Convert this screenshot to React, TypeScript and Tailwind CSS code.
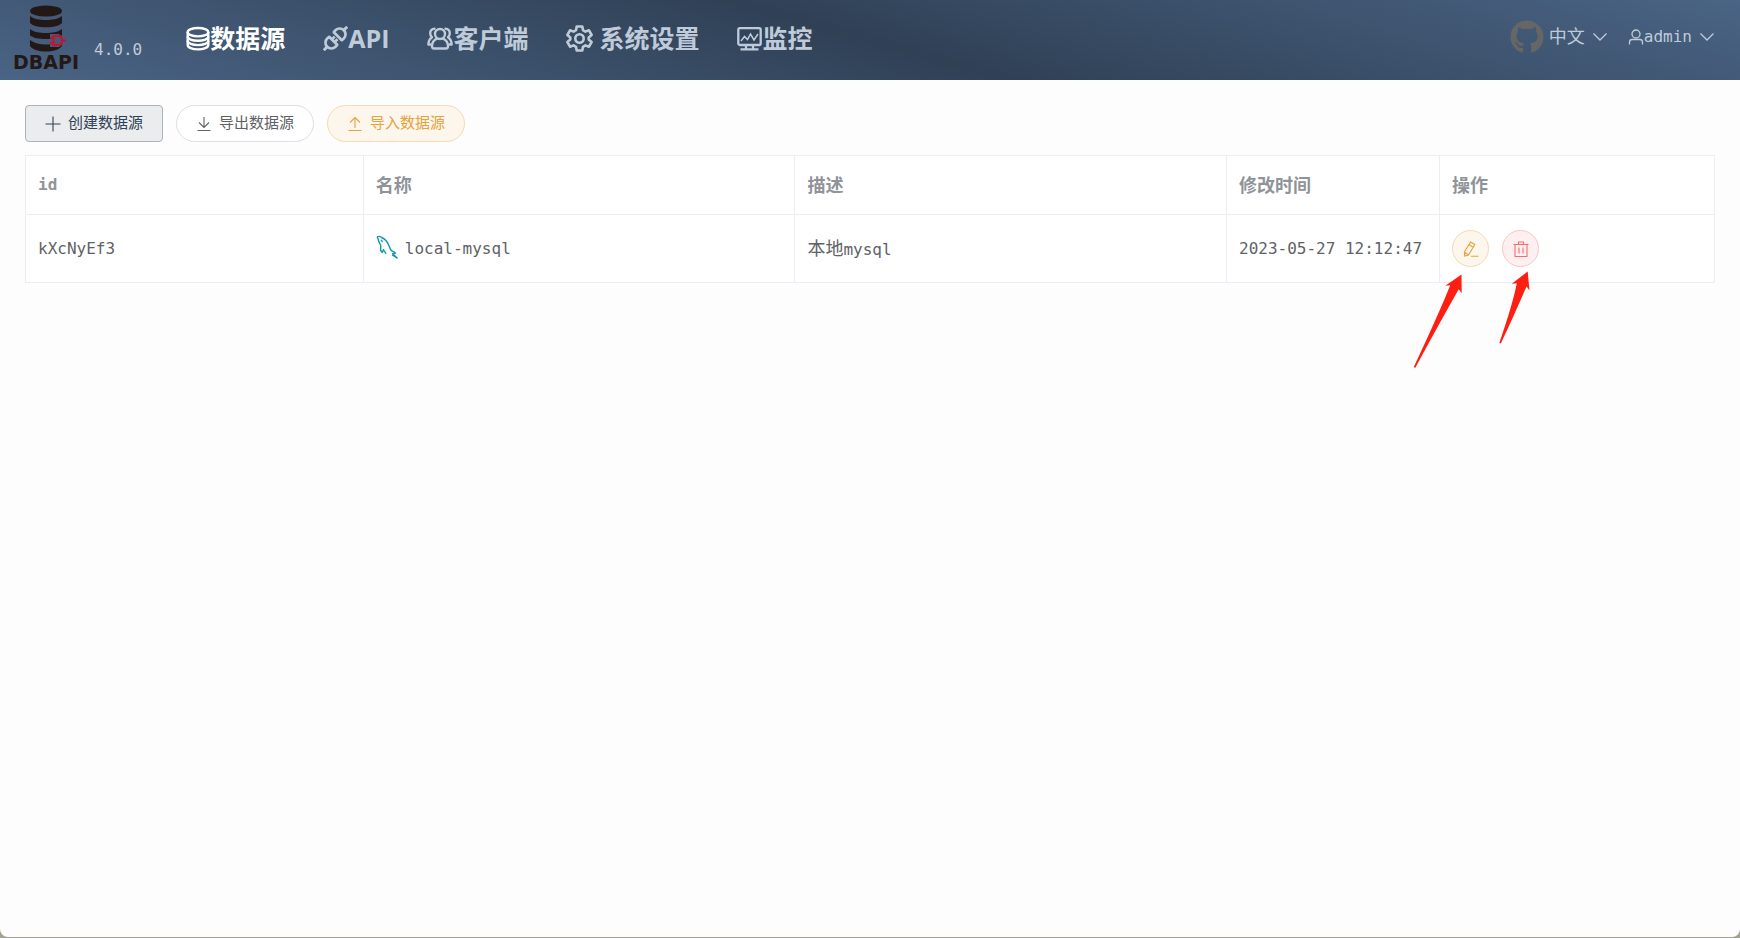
import type { ReactNode } from "react"
import { FaGithub } from "react-icons/fa"

const navItems = [
  { label: "数据源", icon: <DatabaseIcon />, active: true },
  { label: "API", icon: <PlugIcon /> },
  { label: "客户端", icon: <UsersIcon /> },
  { label: "系统设置", icon: <GearIcon />, spaced: true },
  { label: "监控", icon: <MonitorIcon /> },
]

const rows = [{ id: "kXcNyEf3", name: "local-mysql", note: ["本地", "mysql"], updated: "2023-05-27 12:12:47" }]

function Logo() {
  return (
    <a href="#" className="flex w-[66px] flex-col items-center pb-1 text-[#231815]">
      <svg width="42" height="47" viewBox="-3 0 42 47" fill="currentColor" aria-hidden="true">
        <ellipse cx="18" cy="6" rx="16" ry="5.6" />
        <path d="M2 11c4 3.2 10 4 16 4s12-.8 16-4v7c-3 3-9 4.300-16 4.300S5 21 2 18z" />
        <path d="M2 24c4 3.200 10 4 16 4s12-.8 16-4v6c-3 3-9 4-16 4S5 33 2 30.500z" />
        <path d="M2 35c4 3.200 10 4.500 16 4.500s12-1 16-4.500v6c-3 3.800-9 5.500-16 5.500S5 45 2 41z" />
        <path d="M22 29h9l5 5v4l-5 4h-9z" fill="#445a76" />
        <path d="M25.500 31h4c3 0 4.500 2 4.500 4.500S32.500 40 29.500 40h-4z" fill="none" stroke="#c8102e" strokeWidth="2" />
        <path d="M22 33h3.500M22 38h3.500M34 35.500h4" stroke="#c8102e" strokeWidth="2" />
      </svg>
      <span className="mt-px font-['DejaVu_Sans',sans-serif] text-[19px] leading-[18px] font-bold">DBAPI</span>
    </a>
  )
}

function DatabaseIcon() {
  return (
    <svg width="24" height="25" viewBox="0 0 24 25" fill="none" stroke="currentColor" strokeWidth="2.400" aria-hidden="true">
      <ellipse cx="12" cy="6.200" rx="10.300" ry="4.200" />
      <path d="M1.700 6v13c0 2.500 4.600 4.400 10.300 4.400S22.300 21.500 22.300 19V6" />
      <path d="M1.700 10.500c0 2.500 4.600 4.300 10.300 4.300s10.300-1.800 10.300-4.300M1.700 14.800c0 2.500 4.600 4.300 10.300 4.300s10.300-1.800 10.300-4.300" />
    </svg>
  )
}

function PlugIcon() {
  return (
    <svg width="25" height="25" viewBox="0 0 25 25" fill="none" stroke="currentColor" strokeWidth="2.700" strokeLinejoin="round" aria-hidden="true">
      <path d="M.8 24.200l3.700-3.700M20.500 4.500L24.200.8" strokeWidth="3" />
      <path d="M6.200 10.800l8 8-1.700 2a5.600 5.600 0 0 1-8.300-8.300z" />
      <path d="M10.800 6.200l8 8 2-1.700a5.600 5.600 0 0 0-8.300-8.300z" />
      <path d="M8.300 14l3.400-3.400M11 16.700l3.400-3.400" />
    </svg>
  )
}

function UsersIcon() {
  return (
    <svg width="26" height="25" viewBox="0 0 26 25" fill="none" stroke="currentColor" strokeWidth="2.400" strokeLinecap="round" strokeLinejoin="round" aria-hidden="true">
      <circle cx="13" cy="8" r="5" />
      <path d="M10 12.700C7 14 5 17 5 20.300c0 1.500.8 2.200 2 2.200h12c1.200 0 2-.7 2-2.200 0-3.300-2-6.300-5-7.600" />
      <path d="M7.500 2.700C4.800 2.700 3.200 5 3.200 7.300c0 1.700.7 3 1.800 3.900C2.800 12.700 1.400 15 1.400 18.500h2.200M18.500 2.700c2.700 0 4.300 2.300 4.300 4.600 0 1.700-.7 3-1.800 3.900 2.200 1.500 3.600 3.800 3.600 7.300h-2.200" />
    </svg>
  )
}

function GearIcon() {
  return (
    <svg width="27" height="27" viewBox="0 0 27 27" fill="none" stroke="currentColor" strokeWidth="2.600" strokeLinejoin="round" aria-hidden="true">
      <path d="M10.700 1.500h5.600l.7 3.700 2.400 1.400 3.600-1.300 2.600 4.700-2.900 2.400v2.200l2.900 2.400-2.600 4.700-3.600-1.300-2.400 1.400-.7 3.700h-5.600l-.7-3.700-2.400-1.400L4 21.700 1.400 17l2.900-2.400v-2.200L1.400 10 4 5.300l3.600 1.300L10 5.200z" />
      <circle cx="13.500" cy="13.500" r="4.200" />
    </svg>
  )
}

function MonitorIcon() {
  return (
    <svg width="25" height="25" viewBox="0 0 25 25" fill="none" stroke="currentColor" strokeWidth="2.300" aria-hidden="true">
      <rect x="1.300" y="2.200" width="22.400" height="16.800" rx="1.500" />
      <path d="M9 19v4M16 19v4M3.500 23.300h18" />
      <path d="M4 15l3.500-4.500 3 3 3-5.500 3.500 6 4-6" strokeWidth="1.500" />
    </svg>
  )
}

// 16px outline icons share one frame
function LineIcon({ children }: { children: ReactNode }) {
  return (
    <svg width="16" height="16" viewBox="0 0 16 16" fill="none" stroke="currentColor" strokeWidth="1.100" className="shrink-0" aria-hidden="true">
      {children}
    </svg>
  )
}

function ChevronDown() {
  return (
    <LineIcon>
      <path d="M1.500 4.500L8 11l6.500-6.500" strokeWidth="1.300" />
    </LineIcon>
  )
}

function MysqlIcon() {
  return (
    <svg width="22" height="24" viewBox="0 0 22 24" fill="none" stroke="#1397a5" strokeWidth="1.400" strokeLinejoin="round" strokeLinecap="round" className="mb-1" aria-hidden="true">
      <path d="M9.800 18.500L7.400 14.700l-1.200 2.800-1.700-2.500.3-4.300C3.500 8 2.600 6.500 2.400 4.800L1.300 2c1-.9 2.900-.6 4.400.5 4.300 1.700 6 5 7.300 8.300.7 2.200 1.500 4.200 2.800 5.200 1.600.4 2.800 1 3.800 2.100l-3 .5 4.400 4.400" />
      <path d="M20.500 22.500l-4-2.400M5.300 5.200l.9 1.200" />
    </svg>
  )
}

// Annotation arrows pointing at the row actions
function Pointers() {
  return (
    <svg width="120" height="100" viewBox="0 0 120 100" fill="#ff1f12" className="pointer-events-none absolute top-[40px] -left-[39px]" aria-hidden="true">
      <path d="M48.500 4.500L32.300 15.700l4.900-.4Q28 39 .8 97l1.400 1Q26 54 45.700 19.300l3 4z" />
      <path d="M114.700 1.500L98.800 13.800l5-.6Q100 33 86.300 73l1.500.6Q99 50 113.600 16.400l2.900 4z" />
    </svg>
  )
}

export default function App() {
  return (
    <div className="min-h-screen bg-[#a3a292] pb-px font-['DejaVu_Sans_Mono','Noto_Sans_CJK_SC',monospace]">
      <div className="min-h-[calc(100vh-1px)] rounded-b-lg bg-[#fdfdfd]">
        <header className="flex h-20 items-center bg-[linear-gradient(16deg,#4a6485,#304156_50%,#4a6485)] pr-[25px] pl-[13px] text-[#bfcbd9]">
          <Logo />
          <span className="mt-5 ml-[15px] text-base">4.0.0</span>
          <nav className="ml-[44px] flex items-center gap-[38px]">
            {navItems.map((item) => (
              <a
                key={item.label}
                href="#"
                className={`flex items-center pb-1 font-['Open_Sans','Noto_Sans_CJK_SC',sans-serif] text-[25px] leading-9 font-bold ${item.spaced ? "gap-[6px]" : ""} ${item.active ? "text-white" : ""}`}
              >
                {item.icon}
                <span>{item.label}</span>
              </a>
            ))}
          </nav>
          <div className="ml-auto flex items-center pb-[6px]">
            <a href="#" aria-label="GitHub" className="mr-[5px] text-[#666666]">
              <FaGithub size={34} />
            </a>
            <button type="button" className="mr-5 flex items-center gap-[7px] text-[18px] leading-6">
              中文
              <ChevronDown />
            </button>
            <button type="button" className="flex items-center text-base">
              <LineIcon>
                <circle cx="8" cy="5" r="4" strokeWidth="1.300" />
                <path d="M1.500 15.500v-2.300c0-1.700 1-2.700 2.700-2.700h7.600c1.700 0 2.700 1 2.700 2.700v2.300" strokeWidth="1.300" />
              </LineIcon>
              <span className="mr-[7px]">admin</span>
              <ChevronDown />
            </button>
          </div>
        </header>

        <main className="px-[25px] pt-[25px]">
          <div className="mb-[13px] flex gap-[13px] text-[15px] leading-none">
            <button type="button" className="flex h-[37px] items-center gap-[7px] rounded-[4px] border border-[#acb3bb] bg-[#eaecee] px-[19px] text-[#304156]">
              <LineIcon>
                <path d="M8 .5v15M.5 8h15" />
              </LineIcon>
              创建数据源
            </button>
            <button type="button" className="flex h-[37px] items-center gap-[7px] rounded-full border border-[#dcdfe6] bg-white px-[19px] text-[#606266]">
              <LineIcon>
                <path d="M8 1v10M3 6.500l5 5 5-5M1.500 14.500h13" />
              </LineIcon>
              导出数据源
            </button>
            <button type="button" className="flex h-[37px] items-center gap-[7px] rounded-full border border-[#f5dab1] bg-[#fdf6ec] px-[19px] text-[#e6a23c]">
              <LineIcon>
                <path d="M8 12V1.500M3 6.500l5-5 5 5M1.500 14.500h13" />
              </LineIcon>
              导入数据源
            </button>
          </div>

          <table className="w-full table-fixed border-collapse bg-white text-left text-base text-[#606266] [&_td]:border [&_td]:border-[#ebeef5] [&_td]:px-3 [&_th]:border [&_th]:border-[#ebeef5] [&_th]:px-3">
            <colgroup>
              <col className="w-1/5" />
              <col />
              <col />
              <col className="w-[213px]" />
              <col className="w-[275px]" />
            </colgroup>
            <thead className="text-[#909399]">
              <tr className="h-[59px]">
                <th>id</th>
                <th className="text-[18px]">名称</th>
                <th className="text-[18px]">描述</th>
                <th className="text-[18px]">修改时间</th>
                <th className="text-[18px]">操作</th>
              </tr>
            </thead>
            <tbody>
              {rows.map((row) => (
                <tr key={row.id} className="h-[68px]">
                  <td>{row.id}</td>
                  <td>
                    <div className="flex items-center gap-[7px]">
                      <MysqlIcon />
                      {row.name}
                    </div>
                  </td>
                  <td>
                    <span className="text-[18px]">{row.note[0]}</span>
                    {row.note[1]}
                  </td>
                  <td className="whitespace-nowrap">{row.updated}</td>
                  <td>
                    <div className="relative flex gap-[13px]">
                      <button type="button" aria-label="编辑" className="flex size-[37px] items-center justify-center rounded-full border border-[#f5dab1] bg-[#fdf6ec] text-[#e6a23c]">
                        <LineIcon>
                          <path d="M7.500 1l4.300 2.500-6.300 10.500L1.700 15l-.3-4zM6 3.700l4.200 2.500M1.400 11.200l3.800 2.500M8 15.200h7.500" />
                        </LineIcon>
                      </button>
                      <button type="button" aria-label="删除" className="flex size-[37px] items-center justify-center rounded-full border border-[#fbc4c4] bg-[#fef0f0] text-[#f56c6c]">
                        <LineIcon>
                          <path d="M.5 3.500h15M2 3.500v12h12v-12M5.500 3.500V1h5v2.500M6 6.500v6M10 6.500v6" />
                        </LineIcon>
                      </button>
                      <Pointers />
                    </div>
                  </td>
                </tr>
              ))}
            </tbody>
          </table>
        </main>
      </div>
    </div>
  )
}
